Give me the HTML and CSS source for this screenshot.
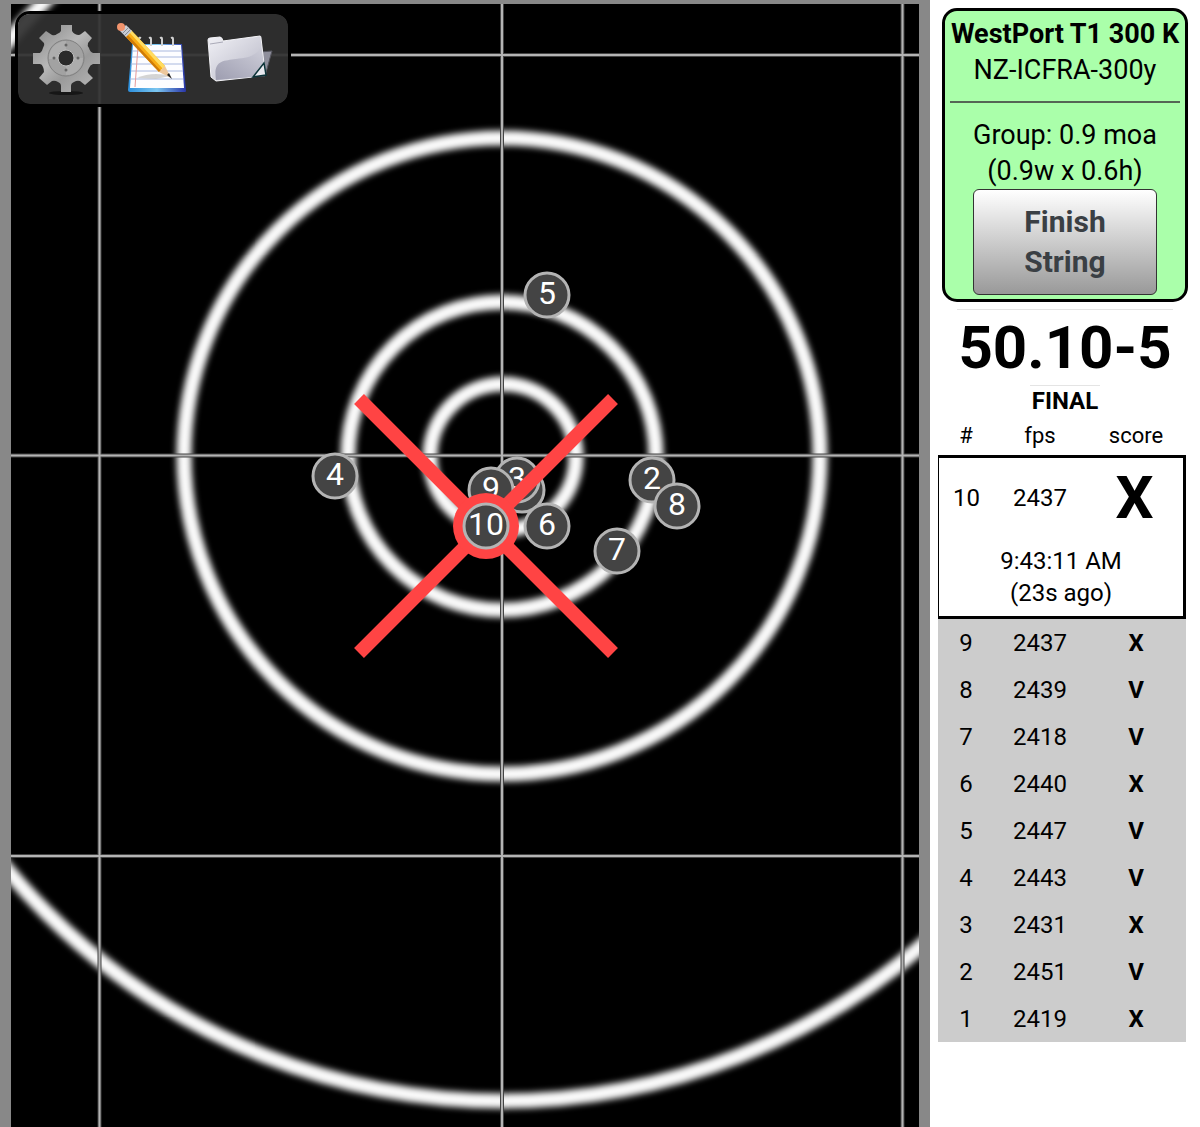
FILE: index.html
```html
<!DOCTYPE html>
<html lang="en">
<head>
    <meta charset="UTF-8">
    <meta name="viewport" content="width=device-width, initial-scale=1.0">
    <title>WestPort T1 300 K</title>
    <link rel="stylesheet" href="styles.css">
</head>
<body>
<main class="page">
    <section class="target">
        <svg class="target-face" viewBox="11 4 908 1123" role="img" aria-label="Target">
            <defs>
                <filter id="soft" x="-10%" y="-10%" width="120%" height="120%">
                    <feGaussianBlur stdDeviation="3"/>
                </filter>
            </defs>
            <g class="rings" filter="url(#soft)">
                <circle cx="503" cy="457" r="73"/>
                <circle cx="502" cy="456" r="154"/>
                <circle cx="502" cy="456" r="318"/>
                <circle cx="502" cy="456" r="645"/>
            </g>
            <path class="grid-edge" d="M99.5 0V1127M502 0V1127M902.5 0V1127M11 55H919M11 455.5H919M11 856H919"/>
            <path class="grid-line" d="M99.5 0V1127M502 0V1127M902.5 0V1127M11 55H919M11 455.5H919M11 856H919"/>

            <g class="shots">
                <circle cx="522" cy="490" r="22"/>
                <circle cx="652" cy="480" r="22"/><text x="652" y="489">2</text>
                <circle cx="517" cy="480" r="22"/><text x="517" y="489">3</text>
                <circle cx="335" cy="476" r="22"/><text x="335" y="485">4</text>
                <circle cx="547" cy="295" r="22"/><text x="547" y="304">5</text>
                <circle cx="547" cy="526" r="22"/><text x="547" y="535">6</text>
                <circle cx="617" cy="551" r="22"/><text x="617" y="560">7</text>
                <circle cx="677" cy="506" r="22"/><text x="677" y="515">8</text>
                <circle cx="491" cy="490" r="22"/><text x="491" y="499">9</text>
            </g>
            <path class="marker-cross" d="M359 399L613 653M613 399L359 653"/>
            <circle class="marker-dot" cx="486" cy="526" r="33"/>
            <g class="shots">
                <circle cx="486" cy="526" r="22"/><text x="486" y="535">10</text>
            </g>
        </svg>

        <nav class="toolbar">
            <button type="button" aria-label="Settings">
                <svg viewBox="30 20 72 76">
                    <defs>
                        <linearGradient id="steel" gradientUnits="userSpaceOnUse" x1="40" y1="30" x2="92" y2="88">
                            <stop offset="0" stop-color="#8e8e8e"/>
                            <stop offset=".4" stop-color="#b8b8b8"/>
                            <stop offset=".65" stop-color="#9a9a9a"/>
                            <stop offset="1" stop-color="#b4b4b4"/>
                        </linearGradient>
                    </defs>
                    <ellipse cx="66" cy="93" rx="17" ry="2" fill="#161616"/>
                    <path fill="url(#steel)" d="M61 25h11v6q1 2 3 3 4 2 6 0l4-3 7 7-4 5q-1 3 1 5 1 4 4 5h7v11h-7q-3 1-4 4-2 3-1 5l5 5-8 7-5-4q-3-1-6 1-3 1-3 4v6H61v-6q0-3-3-4-3-2-6-1l-5 4-8-7 5-6q0-3-1-5-1-3-3-3h-7V53h7q2-1 3-5 2-3 1-5l-5-5 7-7 6 4q3 1 5-1 3-1 4-3z"/>
                    <circle cx="66" cy="58" r="18" fill="#a2a2a2" stroke="#808080"/>
                    <path d="M49 59a17 17 0 0 1 17-18v18zM83 58a17 17 0 0 1-17 17V58z" fill="#b4b4b4" opacity=".6"/>
                    <circle cx="66" cy="58" r="8" fill="#2b2b2b" stroke="#c0c0c0"/>
                    <g fill="#666">
                        <circle cx="66" cy="45" r="1.5"/>
                        <circle cx="66" cy="70" r="1.5"/>
                        <circle cx="54" cy="58" r="1.5"/>
                        <circle cx="78" cy="58" r="1.5"/>
                    </g>
                </svg>
            </button>
            <button type="button" aria-label="Notes">
                <svg viewBox="116 20 72 76">
                    <defs>
                        <linearGradient id="pad">
                            <stop offset="0" stop-color="#2d8fdc"/>
                            <stop offset=".5" stop-color="#7cc6f0"/>
                            <stop offset="1" stop-color="#2a35a8"/>
                        </linearGradient>
                    </defs>
                    <path d="M132 44h50l4 47q0 1-1 1h-55q-2 0-2-2z" fill="url(#pad)"/>
                    <path d="M133 45h48l3 43h-54z" fill="#fdfdff"/>
                    <path d="M132 51h49M132 57h50M131 64h51M131 71h52M130 79h53" stroke="#a9b8de" fill="none"/>
                    <path d="M138 46l-3 41" stroke="#e79a9a" fill="none"/>
                    <path d="M137 78c10-5 24-5 33-2l-14 3z" fill="#c9c9c9" opacity=".8"/>
                    <path d="M139 46v-7q0-2 2-1M149 38q2-1 2 1v7M160 38q2-1 2 1v7M171 38q2-1 2 1v7" stroke="#d0d0d0" stroke-width="2" fill="none"/>
                    <path d="M125 36l6-6 34 36-6 6z" fill="#f9ad14"/>
                    <path d="M129 32l2-2 34 36-2 3z" fill="#ffdc61"/>
                    <path d="M125 36l2-2 34 37-2 1z" fill="#cf7b08"/>
                    <path d="M159 72l6-6 6 12z" fill="#edc79c"/>
                    <path d="M167 75l2-2 3 6z" fill="#222"/>
                    <path d="M120 31l6-6 6 6-6 6z" fill="#c9cdd4"/>
                    <path d="M123 33l6-6M125 35l5-5" stroke="#878c94" fill="none"/>
                    <circle cx="121" cy="27" r="4" fill="#f2946d"/>
                </svg>
            </button>
            <button type="button" aria-label="Open folder">
                <svg viewBox="202 20 72 76">
                    <defs>
                        <linearGradient id="folder" x1="0" y1="0" x2="1" y2="1">
                            <stop offset="0" stop-color="#f1f1f6"/>
                            <stop offset="1" stop-color="#b5b5c4"/>
                        </linearGradient>
                        <linearGradient id="fold" x1="1" y1="0" x2="0" y2="1">
                            <stop offset="0" stop-color="#cfcfda"/>
                            <stop offset="1" stop-color="#9d9db0"/>
                        </linearGradient>
                    </defs>
                    <path d="M260 52l12-1-7 25-14 1z" fill="#8f8f9c" stroke="#55555e"/>
                    <path d="M208 40q0-2 2-2l10-1q2 0 3 4l37-5q1 0 1 2l3 26-11 13-37 4-5-4z" fill="url(#folder)" stroke="#f3f3f7"/>
                    <path d="M216 80c-3-20 7-19 20-21 12-1 20-3 25-12l3 18-12 12z" fill="url(#fold)"/>
                    <path d="M210 44l13-2" stroke="#aaaab8"/>
                    <path d="M253 77l11-14 2 12z" fill="#e9e9ef" stroke="#0c3338" stroke-width="1.5"/>
                </svg>
            </button>
        </nav>
    </section>

    <aside class="sidebar">
        <div class="card">
            <h1>WestPort T1 300 K</h1>
            <p>NZ-ICFRA-300y</p>
            <hr>
            <p>Group: 0.9 moa</p>
            <p>(0.9w x 0.6h)</p>
            <button type="button" class="finish">Finish<br>String</button>
        </div>

        <div class="total">50.10-5</div>
        <div class="status">FINAL</div>

        <table class="score-table">
            <thead>
            <tr><th class="num">#</th><th class="fps">fps</th><th>score</th></tr>
            </thead>
            <tbody class="current">
            <tr><td>10</td><td>2437</td><td class="score">X</td></tr>
            <tr><td colspan="3" class="time">9:43:11 AM<br>(23s ago)</td></tr>
            </tbody>
            <tbody class="previous">
            <tr><td>9</td><td>2437</td><td class="score">X</td></tr>
            <tr><td>8</td><td>2439</td><td class="score">V</td></tr>
            <tr><td>7</td><td>2418</td><td class="score">V</td></tr>
            <tr><td>6</td><td>2440</td><td class="score">X</td></tr>
            <tr><td>5</td><td>2447</td><td class="score">V</td></tr>
            <tr><td>4</td><td>2443</td><td class="score">V</td></tr>
            <tr><td>3</td><td>2431</td><td class="score">X</td></tr>
            <tr><td>2</td><td>2451</td><td class="score">V</td></tr>
            <tr><td>1</td><td>2419</td><td class="score">X</td></tr>
            </tbody>
        </table>
    </aside>
</main>
</body>
</html>
```
FILE: styles.css
```css
* {
    box-sizing: border-box;
}

body {
    background-color: #fff;
    color: #000;
    font-family: Roboto, Arial, sans-serif;
    margin: 0;
}

.page {
    display: flex;
    min-height: 100vh;
}

.target {
    position: relative;
    flex: 1;
    min-width: 0;
    background-color: #000;
    border: solid #888;
    border-width: 4px 11px 0;
}

.target-face {
    display: block;
    width: 100%;
}

.rings {
    fill: none;
    stroke: #fafafa;
    stroke-width: 15px;
}

.grid-edge {
    stroke: #444;
    stroke-width: 4px;
}

.grid-line {
    stroke: #b4b4b4;
    stroke-width: 2px;
}

.shots circle {
    fill: #444;
    stroke: #b4b4b4;
    stroke-width: 3px;
}

.shots text {
    fill: #fff;
    font-size: 32px;
    text-anchor: middle;
}

.marker-cross {
    stroke: #f44;
    stroke-width: 14px;
}

.marker-dot {
    fill: #f44;
}

/* floats over the target */
.toolbar {
    position: absolute;
    top: 7px;
    left: 4px;
    display: flex;
    gap: 14px;
    padding: 6px 14px 8px 12px;
    background-color: rgba(48, 48, 48, 0.93);
    background-clip: padding-box;
    border: 3px solid #000;
    border-radius: 15px;
}

.toolbar button {
    padding: 0;
    border: none;
    background: none;
    cursor: pointer;
}

.toolbar svg {
    display: block;
    width: 72px;
    height: 76px;
}

.sidebar {
    width: 270px;
    padding: 8px 12px 0;
    text-align: center;
}

.card {
    padding: 5px;
    padding-bottom: 4px;
    background-color: #afa;
    border: 3px solid #000;
    border-radius: 15px;
}

.card h1,
.card p {
    margin: 0;
    font-size: 27px;
    line-height: 36px;
    white-space: nowrap;
}

.card hr {
    height: 2px;
    margin: 13px 0 14px;
    border: none;
    background-color: #565;
}

.finish {
    display: block;
    width: 184px;
    height: 106px;
    margin: 0 auto;
    border: 1px solid #333;
    border-radius: 6px;
    background: linear-gradient(#fff, #999);
    color: #3a3f44;
    font: bold 30px/40px Roboto, Arial, sans-serif;
    cursor: pointer;
}

.total {
    margin: 7px 15px 0;
    border-top: 1px solid #e4e4e4;
    font-size: 60px;
    font-weight: bold;
    line-height: 75px;
}

.status {
    width: 70px;
    margin: 0 auto;
    border-top: 1px solid #e4e4e4;
    font-size: 24px;
    font-weight: bold;
    line-height: 30px;
}

.score-table {
    width: 248px;
    margin-left: -4px;
    border-spacing: 0;
    table-layout: fixed;
    font-size: 24px;
}

.score-table th {
    height: 39px;
    padding: 0;
    font-size: 22px;
    font-weight: normal;
}

.score-table td {
    height: 47px;
    padding: 0;
}

.score-table .num {
    width: 56px;
}

.score-table .fps {
    width: 92px;
}

.score-table .score {
    font-weight: bold;
}

.current td {
    height: 82px;
    border-top: 3px solid #000;
}

.current td:first-child {
    border-left: 1px solid #000;
}

.current td:last-child {
    border-right: 3px solid #000;
}

.current .score {
    font-size: 60px;
}

.current .time {
    border-top: none;
    border-bottom: 3px solid #000;
    line-height: 32px;
}

.previous {
    background-color: #ccc;
}
```
